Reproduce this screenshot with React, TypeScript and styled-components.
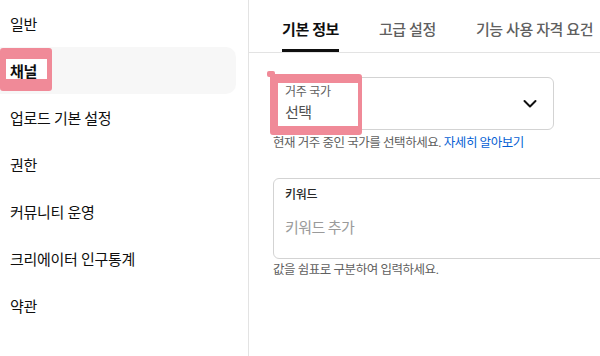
import React from "react";
import styled, { createGlobalStyle } from "styled-components";

const Global = createGlobalStyle`
  html, body { margin: 0; padding: 0; background: #ffffff; }
  body {
    font-family: Roboto, "Noto Sans CJK KR", sans-serif;
    color: #0f0f0f;
    -webkit-font-smoothing: antialiased;
  }
`;

const Page = styled.div`
  position: relative;
  display: flex;
  width: 600px;
  height: 356px;
  overflow: hidden;
  background: #ffffff;
`;

const Sidebar = styled.nav`
  width: 236px;
  padding-right: 12px;
  border-right: 1px solid #e3e3e3;
  display: flex;
  flex-direction: column;
  flex-shrink: 0;
`;

const NavItem = styled.div<{ $active?: boolean }>`
  height: 47px;
  display: flex;
  align-items: center;
  padding-left: 10px;
  border-radius: 0 10px 10px 0;
  background: ${(p) => (p.$active ? "#f7f7f7" : "transparent")};
  font-size: 15px;
  letter-spacing: -0.3px;
  font-weight: ${(p) => (p.$active ? 600 : 400)};
  color: #0f0f0f;
`;

const Label = styled.span`
  position: relative;
  z-index: 2;
`;

const Main = styled.main`
  flex: 1;
  display: flex;
  flex-direction: column;
  min-width: 0;
`;

const TabBar = styled.div`
  height: 52px;
  border-bottom: 1px solid #e3e3e3;
  display: flex;
  gap: 40px;
  padding-left: 33px;
`;

const Tab = styled.div<{ $active?: boolean }>`
  display: flex;
  align-items: center;
  padding-top: 7px;
  box-sizing: border-box;
  height: 52px;
  border-bottom: 3px solid ${(p) => (p.$active ? "#0f0f0f" : "transparent")};
  font-size: 15px;
  letter-spacing: -0.4px;
  font-weight: ${(p) => (p.$active ? 700 : 500)};
  color: ${(p) => (p.$active ? "#0f0f0f" : "#606060")};
  white-space: nowrap;
`;

const Content = styled.div`
  padding: 24px 0 0 24px;
  display: flex;
  flex-direction: column;
`;

const Field = styled.div<{ $width: number; $height: number; $top?: number }>`
  position: relative;
  width: ${(p) => p.$width}px;
  height: ${(p) => p.$height}px;
  margin-top: ${(p) => p.$top ?? 0}px;
  box-sizing: border-box;
  border: 1px solid #d3d3d3;
  border-radius: 6px;
  padding-left: 11px;
  display: flex;
  flex-direction: column;
  flex-shrink: 0;
`;

const FieldLabel = styled.span<{ $top: number; $strong?: boolean }>`
  position: relative;
  z-index: 2;
  margin-top: ${(p) => p.$top}px;
  font-size: 12px;
  line-height: 14px;
  letter-spacing: -0.3px;
  font-weight: ${(p) => (p.$strong ? 500 : 400)};
  color: ${(p) => (p.$strong ? "#282828" : "#606060")};
`;

const FieldValue = styled.span<{ $top: number; $muted?: boolean }>`
  position: relative;
  z-index: 2;
  margin-top: ${(p) => p.$top}px;
  font-size: 15px;
  line-height: 18px;
  letter-spacing: -0.6px;
  color: ${(p) => (p.$muted ? "#9a9a9a" : "#505050")};
`;

const Chevron = styled.svg`
  position: absolute;
  right: 16px;
  top: 50%;
  transform: translateY(-50%);
`;

const Helper = styled.div<{ $top: number }>`
  margin-top: ${(p) => p.$top}px;
  font-size: 12.5px;
  line-height: 14px;
  letter-spacing: -0.45px;
  color: #606060;
  white-space: nowrap;
`;

const Link = styled.span`
  color: #065fd4;
`;

const Highlight = styled.div<{
  $x: number;
  $y: number;
  $w: number;
  $h: number;
  $bt: number;
  $br: number;
  $bb: number;
  $bl: number;
}>`
  position: absolute;
  z-index: 1;
  left: ${(p) => p.$x}px;
  top: ${(p) => p.$y}px;
  width: ${(p) => p.$w}px;
  height: ${(p) => p.$h}px;
  box-sizing: border-box;
  border-style: solid;
  border-color: #f08a98;
  border-width: ${(p) => `${p.$bt}px ${p.$br}px ${p.$bb}px ${p.$bl}px`};
  border-radius: 3px;
  background: #ffffff;
`;

const Notch = styled.div`
  position: absolute;
  z-index: 1;
  left: 267px;
  top: 71px;
  width: 8px;
  height: 6px;
  border-radius: 2px;
  background: #f08a98;
`;

const navItems = [
  "일반",
  "채널",
  "업로드 기본 설정",
  "권한",
  "커뮤니티 운영",
  "크리에이터 인구통계",
  "약관",
];

export default function App() {
  return (
    <>
      <Global />
      <Page>
        <Sidebar>
          {navItems.map((t) => (
            <NavItem key={t} $active={t === "채널"}>
              <Label>{t}</Label>
            </NavItem>
          ))}
        </Sidebar>
        <Main>
          <TabBar>
            <Tab $active>기본 정보</Tab>
            <Tab>고급 설정</Tab>
            <Tab>기능 사용 자격 요건</Tab>
          </TabBar>
          <Content>
            <Field $width={281} $height={53}>
              <FieldLabel $top={7}>거주 국가</FieldLabel>
              <FieldValue $top={5}>선택</FieldValue>
              <Chevron width="14" height="9" viewBox="0 0 14 9" fill="none">
                <path
                  d="M1.5 1.5 L7 7 L12.5 1.5"
                  stroke="#0f0f0f"
                  strokeWidth="2"
                  strokeLinecap="round"
                  strokeLinejoin="round"
                />
              </Chevron>
            </Field>
            <Helper $top={6}>
              현재 거주 중인 국가를 선택하세요. <Link>자세히 알아보기</Link>
            </Helper>
            <Field $width={360} $height={81} $top={28}>
              <FieldLabel $top={9} $strong>
                키워드
              </FieldLabel>
              <FieldValue $top={17} $muted>
                키워드 추가
              </FieldValue>
            </Field>
            <Helper $top={4}>값을 쉼표로 구분하여 입력하세요.</Helper>
          </Content>
        </Main>
        <Highlight $x={0} $y={48} $w={52} $h={43} $bt={11} $br={5} $bb={12} $bl={6} />
        <Highlight $x={270} $y={74} $w={92} $h={61} $bt={9} $br={4} $bb={9} $bl={8} />
        <Notch />
      </Page>
    </>
  );
}
